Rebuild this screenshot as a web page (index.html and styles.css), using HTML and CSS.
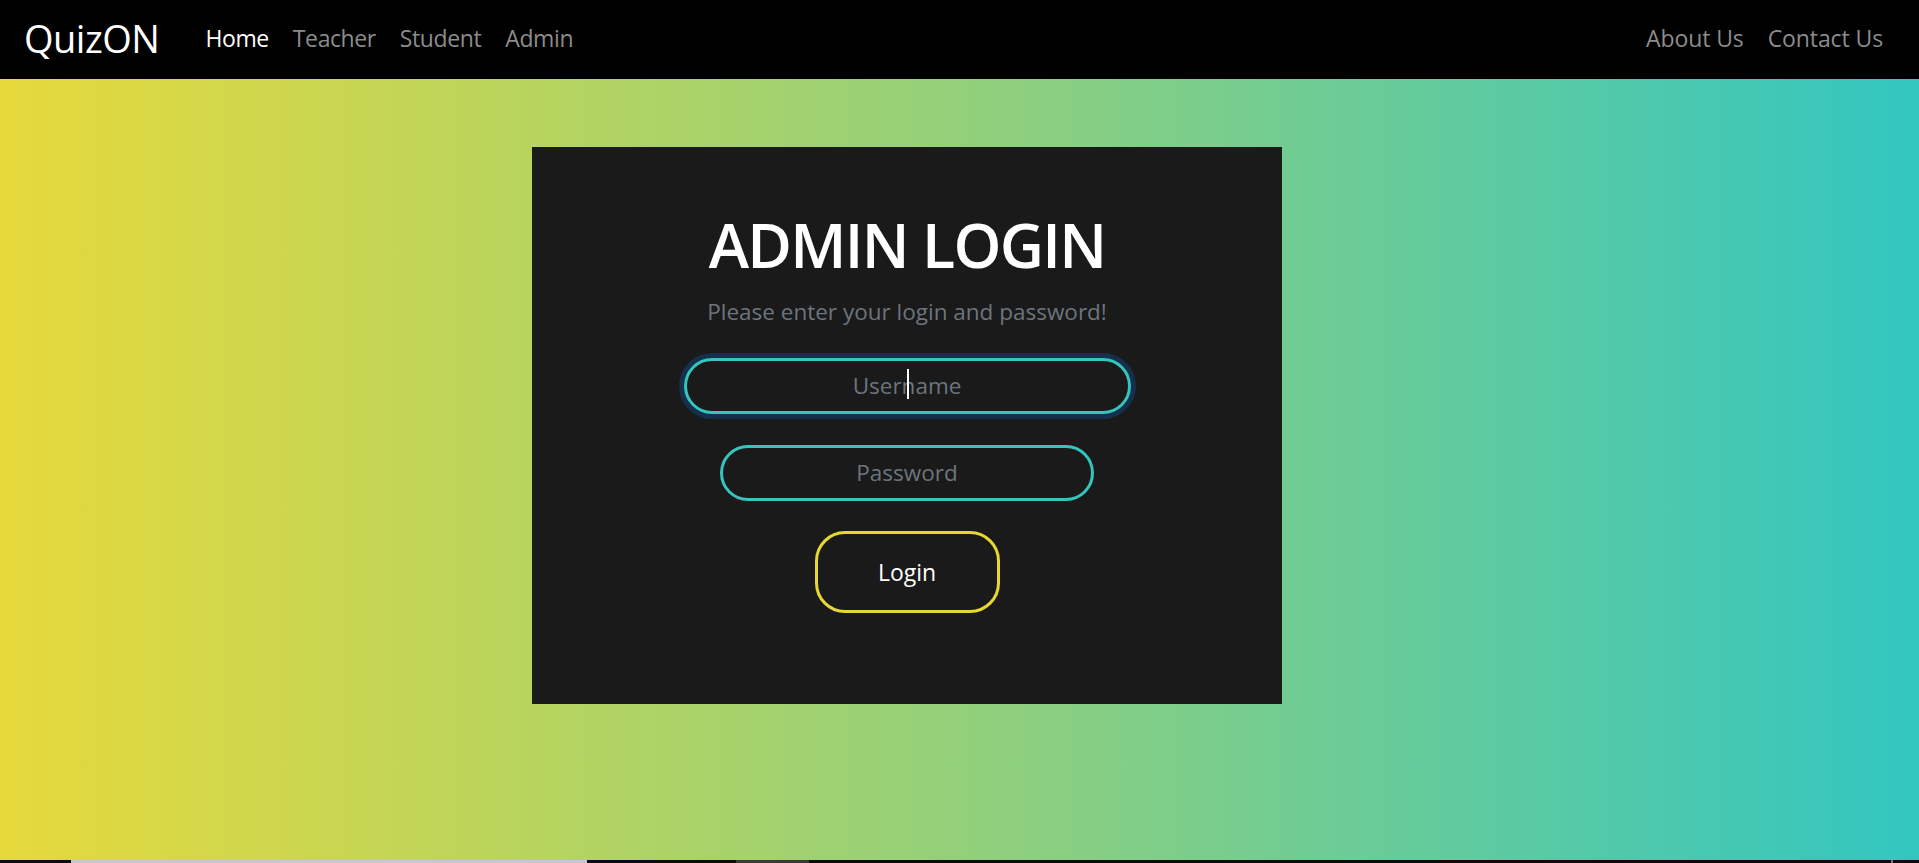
FILE: index.html
```html
<!DOCTYPE html>
<html lang="en">
<head>
<meta charset="utf-8">
<title>QuizON - Admin Login</title>
<link rel="stylesheet" href="styles.css">
</head>
<body>
<nav class="navbar">
  <a class="brand" href="#">QuizON</a>
  <ul class="nav-links">
    <li><a class="nav-link active" href="#">Home</a></li>
    <li><a class="nav-link" href="#">Teacher</a></li>
    <li><a class="nav-link" href="#">Student</a></li>
    <li><a class="nav-link" href="#">Admin</a></li>
  </ul>
  <ul class="nav-links nav-right">
    <li><a class="nav-link" href="#">About Us</a></li>
    <li><a class="nav-link" href="#">Contact Us</a></li>
  </ul>
</nav>
<main class="hero">
  <section class="card">
    <h1 class="title">ADMIN LOGIN</h1>
    <p class="subtitle">Please enter your login and password!</p>
    <form class="login-form">
      <div class="field-wrap">
        <input class="field field-focus" type="text" placeholder="Username">
        <span class="caret"></span>
      </div>
      <input class="field" type="password" placeholder="Password">
      <button class="btn-login" type="button">Login</button>
    </form>
  </section>
</main>
<div class="bottom-bar">
  <span class="seg seg-black seg-a"></span>
  <span class="seg seg-thumb"></span>
  <span class="seg seg-black seg-b"></span>
  <span class="seg seg-dark"></span>
  <span class="seg seg-black seg-fill"></span>
  <span class="seg seg-tick"></span>
  <span class="seg seg-black seg-end"></span>
</div>
</body>
</html>
```

FILE: styles.css
```css
* { box-sizing: border-box; }

html, body {
  margin: 0;
  padding: 0;
  height: 863px;
  overflow: hidden;
  font-family: "Segoe UI", "Open Sans", "Noto Sans", sans-serif;
  background: #000;
}

.navbar {
  height: 79px;
  background: #000;
  display: flex;
  align-items: center;
  padding: 0 24px 4px 24px;
}

.brand {
  color: #fff;
  text-decoration: none;
  font-size: 38px;
  line-height: 1;
  margin-right: 34px;
  letter-spacing: -0.5px;
}

.nav-links {
  list-style: none;
  margin: 0;
  padding: 0;
  display: flex;
  align-items: center;
}

.nav-right { margin-left: auto; }

.nav-link {
  display: block;
  padding: 0 12px;
  font-size: 23px;
  color: #8c8c8c;
  text-decoration: none;
  letter-spacing: -0.4px;
}

.nav-right .nav-link { letter-spacing: -0.1px; }

.nav-link.active { color: #fff; }

.hero {
  height: 781px;
  background: linear-gradient(to right, #e6d93b 0%, #93d07a 50%, #32c6c0 100%);
  padding: 68px 0 0 532px;
}

.card {
  width: 750px;
  height: 557px;
  background: #1a1a1a;
  display: flex;
  flex-direction: column;
  align-items: center;
  padding-top: 61px;
}

.title {
  margin: 0;
  color: #fff;
  font-size: 61px;
  font-weight: 600;
  line-height: 1.2;
  letter-spacing: -1.7px;
}

.subtitle {
  margin: 14px 0 0;
  color: #6c757d;
  font-size: 22.5px;
  line-height: 1.5;
}

.login-form {
  display: flex;
  flex-direction: column;
  align-items: center;
  margin-top: 29px;
}

.field-wrap {
  position: relative;
  display: flex;
}

.field {
  width: 374px;
  height: 56px;
  border: 3px solid #36c5be;
  border-radius: 28px;
  background: transparent;
  color: #fff;
  text-align: center;
  font-family: inherit;
  font-size: 22.5px;
  outline: none;
  margin-bottom: 31px;
}

.field::placeholder { color: #6c757d; }

.field-focus {
  width: 447px;
  box-shadow: 0 0 0 5px #14304d;
}

.caret {
  position: absolute;
  left: 223px;
  top: 11px;
  width: 2px;
  height: 30px;
  background: #fff;
}

.btn-login {
  width: 185px;
  height: 82px;
  border: 3px solid #e6d733;
  border-radius: 30px;
  background: transparent;
  color: #fff;
  font-family: inherit;
  font-size: 23px;
  margin-top: -1px;
}

.bottom-bar {
  height: 3px;
  display: flex;
  background: #0b0b0b;
}

.seg { display: block; height: 3px; }
.seg-black { background: #0b0b0b; }
.seg-a { width: 71px; }
.seg-thumb { width: 516px; background: #c8c8c8; }
.seg-b { width: 149px; }
.seg-dark { width: 73px; background: #3a3a3a; }
.seg-fill { flex: 1; }
.seg-tick { width: 2px; background: #777; }
.seg-end { width: 26px; }
```
